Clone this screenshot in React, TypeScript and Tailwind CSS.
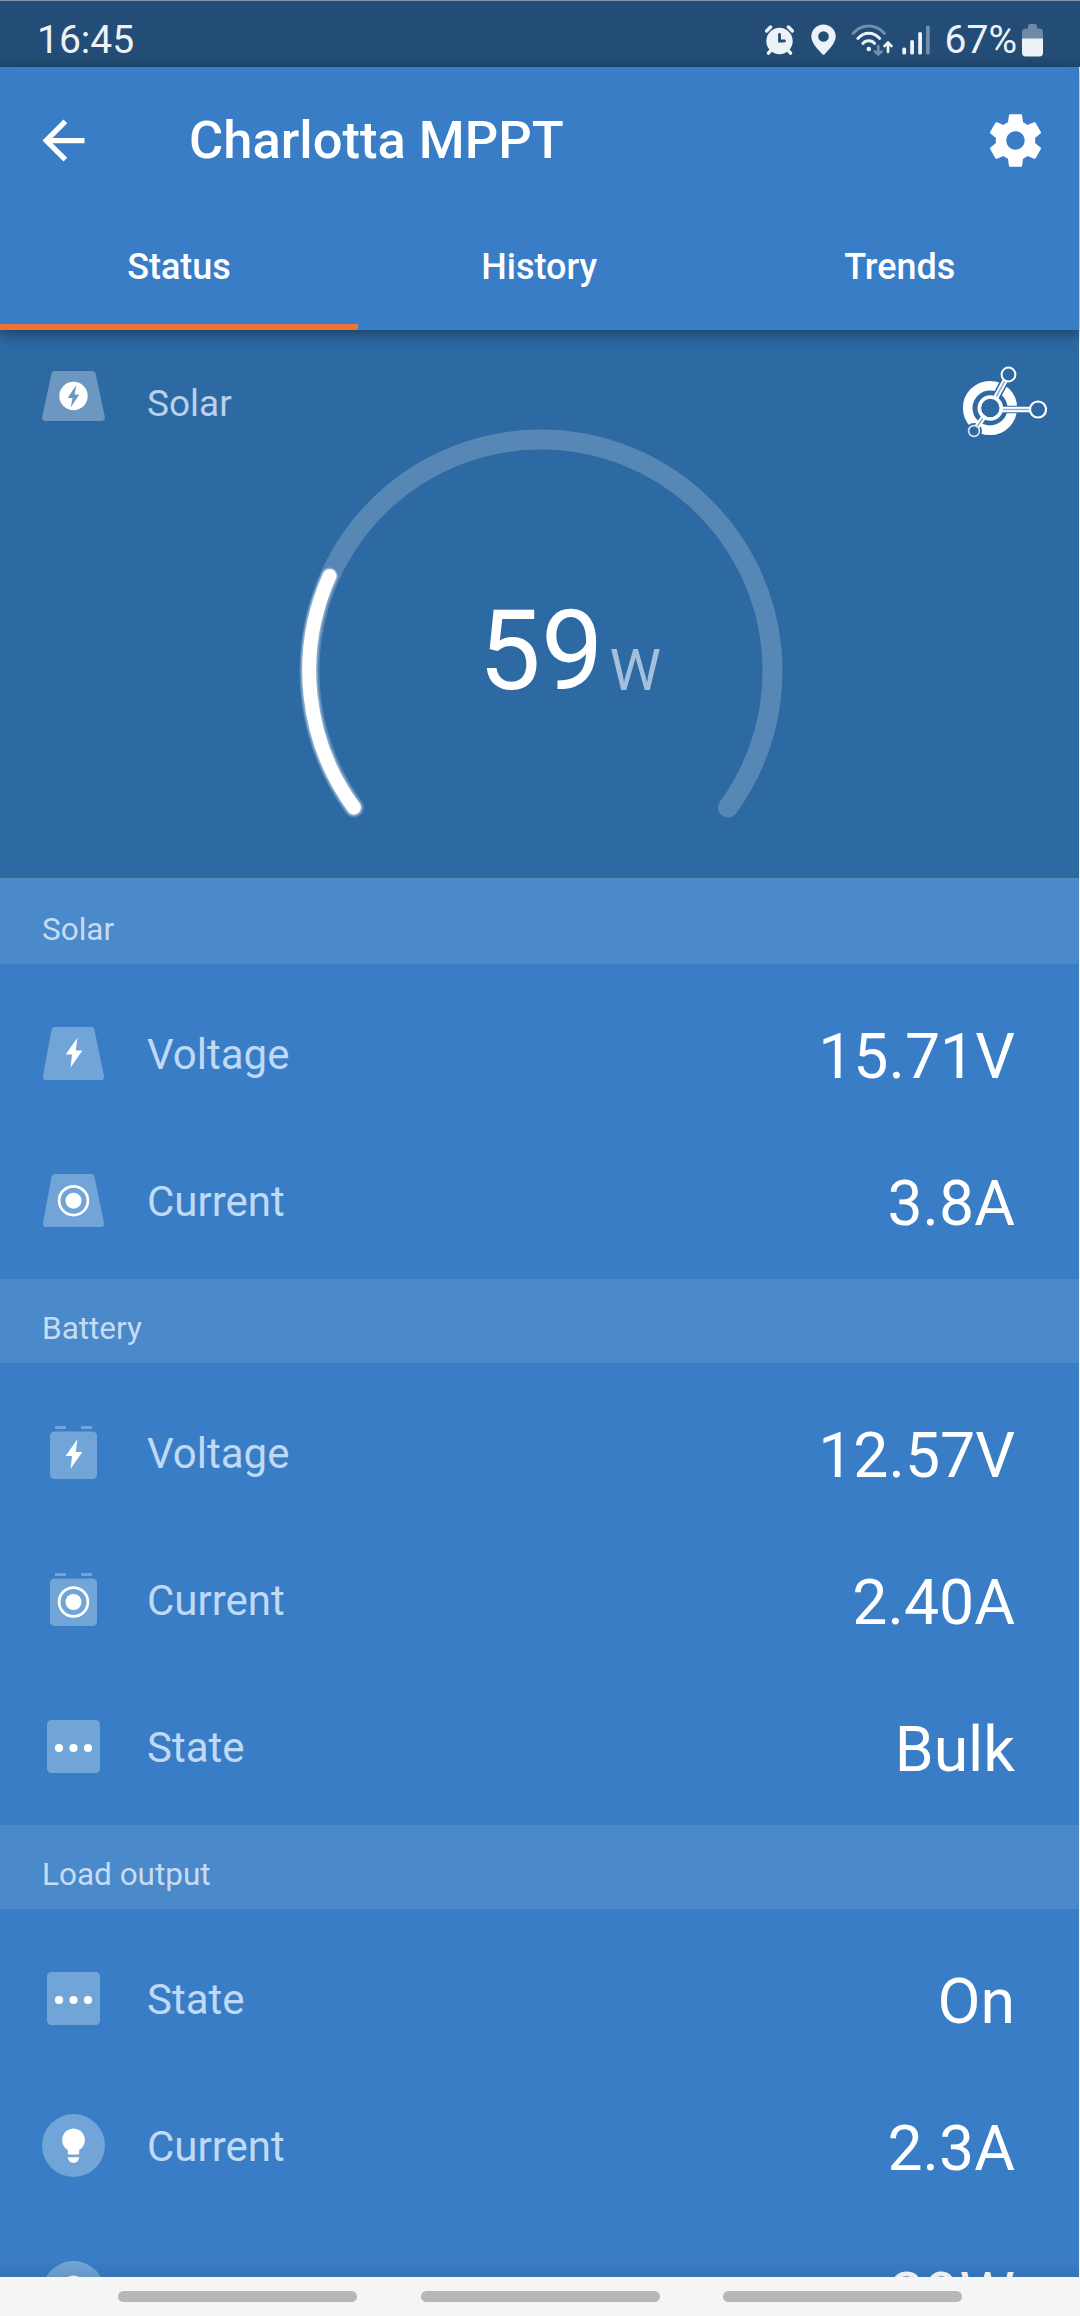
import React from 'react';

const BOLT = 'M35.4 16 L23.6 32.6 H30 L28.6 45.4 L40.4 28.6 H33.8 Z';

const PanelShape = () => (
  <path d="M13 5 H49.5 Q52 5 52.5 8 L62 54 Q62.6 58 59 58 H4 Q0.4 58 1 54 L9.5 8 Q10 5 13 5 Z" fill="#71a4d7" />
);

const BatteryShape = () => (
  <g fill="#71a4d7">
    <rect x="13" y="5" width="11" height="3" />
    <rect x="39" y="5" width="11" height="3" />
    <rect x="8" y="10.5" width="47" height="47.5" rx="4.5" />
  </g>
);

const Target = ({ cy }: { cy: number }) => (
  <g>
    <circle cx="31.5" cy={cy} r="14.4" fill="none" stroke="white" strokeWidth="2.7" />
    <circle cx="31.5" cy={cy} r="8" fill="white" />
  </g>
);

const icons = {
  panelVoltage: (
    <>
      <PanelShape />
      <path d={BOLT} fill="white" />
    </>
  ),
  panelCurrent: (
    <>
      <PanelShape />
      <Target cy={31.7} />
    </>
  ),
  batteryVoltage: (
    <>
      <BatteryShape />
      <path d={BOLT} fill="white" transform="translate(0 2.3)" />
    </>
  ),
  batteryCurrent: (
    <>
      <BatteryShape />
      <Target cy={34} />
    </>
  ),
  state: (
    <>
      <rect x="5" y="5" width="53" height="53" rx="4.5" fill="#71a4d7" />
      <circle cx="17" cy="33" r="4.1" fill="white" />
      <circle cx="31.5" cy="33" r="4.1" fill="white" />
      <circle cx="46" cy="33" r="4.1" fill="white" />
    </>
  ),
  bulb: (
    <>
      <circle cx="31.5" cy="31.5" r="31.5" fill="#71a4d7" />
      <path
        d="M31.5 14.4 A11.6 11.6 0 0 1 37.2 36 V39.5 Q37.2 40.4 36.2 40.4 H26.8 Q25.8 40.4 25.8 39.5 V36 A11.6 11.6 0 0 1 31.5 14.4 Z"
        fill="white"
      />
      <path d="M25.8 43.2 H37.2 A5.7 5.7 0 0 1 25.8 43.2 Z" fill="white" />
    </>
  ),
};

type RowProps = {
  icon: keyof typeof icons;
  label?: string;
  value: string;
};

type SectionProps = {
  title: string;
  rows: RowProps[];
  first?: boolean;
};

const sections: SectionProps[] = [
  {
    title: 'Solar',
    first: true,
    rows: [
      { icon: 'panelVoltage', label: 'Voltage', value: '15.71V' },
      { icon: 'panelCurrent', label: 'Current', value: '3.8A' },
    ],
  },
  {
    title: 'Battery',
    rows: [
      { icon: 'batteryVoltage', label: 'Voltage', value: '12.57V' },
      { icon: 'batteryCurrent', label: 'Current', value: '2.40A' },
      { icon: 'state', label: 'State', value: 'Bulk' },
    ],
  },
  {
    title: 'Load output',
    rows: [
      { icon: 'state', label: 'State', value: 'On' },
      { icon: 'bulb', label: 'Current', value: '2.3A' },
      { icon: 'bulb', value: '29W' },
    ],
  },
];

const Row = ({ icon, label, value }: RowProps) => (
  <div className="flex h-[147px] shrink-0 items-center pl-[42px] pr-[64px]">
    <svg viewBox="0 0 63 63" className="mb-0.5 size-[63px] shrink-0">
      {icons[icon]}
    </svg>
    {label && <span className="ml-[42px] text-[42px] leading-none text-[#c0d9f4]">{label}</span>}
    <span className="ml-auto pt-1.5 text-[62.5px] leading-none text-white">{value}</span>
  </div>
);

const Section = ({ title, rows, first }: SectionProps) => (
  <section className="shrink-0">
    <h2
      className={`flex items-end pb-[15px] pl-[42px] text-[31.5px] leading-[38px] text-[#c6dcf3] bg-[#4b8aca] ${
        first ? 'h-[86px] border-t-2 border-[#5688b8]' : 'h-[84px]'
      }`}
    >
      {title}
    </h2>
    <div className="pt-[17px] pb-1">
      {rows.map((row) => (
        <Row key={row.value} {...row} />
      ))}
    </div>
  </section>
);

const StatusBar = () => (
  <div className="flex h-[67px] items-center border-t border-[#8496a8] bg-[#234d76] pl-[37px] pr-[37px] text-[#edf2f7]">
    <span className="pt-[13px] text-[39px] leading-none">16:45</span>
    <svg viewBox="0 0 29 30" className="ml-auto mt-3 h-[30px] w-[29px]">
      <circle cx="14.5" cy="16" r="13.2" fill="#edf2f7" />
      <path d="M1.6 6 L5.6 2 M27.4 6 L23.4 2" stroke="#edf2f7" strokeWidth="3.4" strokeLinecap="round" />
      <path d="M6 25 L3.6 28 M23 25 L25.4 28" stroke="#edf2f7" strokeWidth="3.6" strokeLinecap="round" />
      <path d="M14.5 9.5 V16 H19.5" fill="none" stroke="#234d76" strokeWidth="2.8" strokeLinecap="round" />
    </svg>
    <svg viewBox="0 0 25 31" className="ml-[17px] mt-[11px] h-[31px] w-[25px]">
      <path
        d="M12.5 0.5 A12.2 12.2 0 0 1 24.7 12.6 C24.7 19 18 25.5 13.7 30.2 Q12.5 31.3 11.3 30.2 C7 25.5 0.3 19 0.3 12.6 A12.2 12.2 0 0 1 12.5 0.5 Z M12.5 7.2 A5.3 5.3 0 1 0 12.5 17.8 A5.3 5.3 0 1 0 12.5 7.2 Z"
        fill="#edf2f7"
        fillRule="evenodd"
      />
    </svg>
    <svg viewBox="0 0 42 32" className="ml-[15px] mt-[12px] h-[32px] w-[42px]" fill="none" strokeLinecap="round">
      <path d="M2 9.5 C10.5 -0.5 25 -0.5 33.5 9.5" stroke="#728eab" strokeWidth="2.8" />
      <path d="M6.8 14.5 C13 7.5 22.5 7.5 28.7 14.5" stroke="#edf2f7" strokeWidth="2.8" />
      <path d="M11.8 19.5 C15 15.8 20.5 15.8 23.7 19.5" stroke="#edf2f7" strokeWidth="2.8" />
      <circle cx="17.8" cy="25" r="2.3" fill="#edf2f7" />
      <path d="M27.3 22 V30.4 M24 27.4 L27.3 30.4 L30.6 27.4" stroke="#728eab" strokeWidth="2.7" />
      <path d="M37 28 V19 M33.6 22 L37 18.6 L40.4 22" stroke="#edf2f7" strokeWidth="2.7" />
    </svg>
    <svg viewBox="0 0 28 30" className="ml-[9px] mt-[12px] h-[30px] w-[28px]">
      <rect x="0.3" y="22.5" width="3.8" height="7" rx="1.6" fill="#edf2f7" />
      <rect x="8.2" y="15" width="3.8" height="14.5" rx="1.6" fill="#edf2f7" />
      <rect x="16.2" y="7" width="3.8" height="22.5" rx="1.6" fill="#edf2f7" />
      <rect x="24" y="0.5" width="3.8" height="29" rx="1.6" fill="#728eab" />
    </svg>
    <span className="ml-[15px] pt-[13px] text-[39px] leading-none">67%</span>
    <svg viewBox="0 0 21 33" className="ml-[5px] mt-[12px] h-[33px] w-[21px]">
      <path d="M0 15 V8 Q0 4.5 4 4.5 H6 V2 Q6 0 8 0 H13 Q15 0 15 2 V4.5 H17 Q21 4.5 21 8 V15 Z" fill="#6f8aa7" />
      <path d="M0 14.5 H21 V28.5 Q21 32.5 17.5 32.5 H3.5 Q0 32.5 0 28.5 Z" fill="#edf2f7" />
    </svg>
  </div>
);

const Header = () => (
  <header className="relative z-10 bg-[#397dc6] text-white shadow-[0_3px_14px_rgba(0,0,0,0.45)]">
    <div className="flex h-[147px] items-center px-[32px]">
      <svg viewBox="0 0 24 24" fill="white" className="size-[63px]">
        <path d="M20 11H7.83l5.59-5.59L12 4l-8 8 8 8 1.41-1.41L7.83 13H20v-2z" />
      </svg>
      <h1 className="ml-[94px] text-[52.5px] font-medium leading-none">Charlotta MPPT</h1>
      <svg viewBox="0 0 24 24" fill="white" className="ml-auto size-[63px]">
        <path d="M19.43 12.98c.04-.32.07-.64.07-.98s-.03-.66-.07-.98l2.11-1.65c.19-.15.24-.42.12-.64l-2-3.46c-.12-.22-.39-.3-.61-.22l-2.49 1c-.52-.4-1.08-.73-1.69-.98l-.38-2.65C14.46 2.18 14.25 2 14 2h-4c-.25 0-.46.18-.49.42l-.38 2.65c-.61.25-1.17.59-1.69.98l-2.49-1c-.23-.09-.49 0-.61.22l-2 3.46c-.13.22-.07.49.12.64l2.11 1.65c-.04.32-.07.65-.07.98s.03.66.07.98l-2.11 1.65c-.19.15-.24.42-.12.64l2 3.46c.12.22.39.3.61.22l2.49-1c.52.4 1.08.73 1.69.98l.38 2.65c.03.24.24.42.49.42h4c.25 0 .46-.18.49-.42l.38-2.65c.61-.25 1.17-.59 1.69-.98l2.49 1c.23.09.49 0 .61-.22l2-3.46c.12-.22.07-.49-.12-.64l-2.11-1.65zM12 15.5c-1.93 0-3.5-1.57-3.5-3.5s1.57-3.5 3.5-3.5 3.5 1.57 3.5 3.5-1.57 3.5-3.5 3.5z" />
      </svg>
    </div>
    <nav className="flex h-[116px] text-[36px] font-medium leading-none">
      <div className="flex w-[358px] items-center justify-center border-b-[6px] border-[#ee7335] pb-1">Status</div>
      <div className="flex flex-1 items-center justify-center pb-2.5 pl-0.5">History</div>
      <div className="flex flex-1 items-center justify-center pb-2.5 pl-0.5">Trends</div>
    </nav>
  </header>
);

const HubLogo = () => (
  <svg viewBox="0 0 85 72" className="h-[72px] w-[85px]" fill="none">
    <circle cx="28" cy="42" r="22.3" stroke="white" strokeWidth="9.6" />
    {/* gaps that the spokes cut into the ring */}
    <path d="M28 42 L46.5 8.5" stroke="#2d69a3" strokeWidth="8.5" />
    <path d="M28 43.5 H76" stroke="#2d69a3" strokeWidth="7.5" />
    <circle cx="12" cy="65" r="8" fill="#2d69a3" />
    <path d="M28 42 L46.5 8.5 M28 42 L12 65 M28 43.5 H70" stroke="white" strokeWidth="5.4" />
    <path d="M28 42 L46.5 8.5 M28 42 L12 65 M28 43.5 H70" stroke="#8fb1d1" strokeWidth="1.6" />
    <circle cx="28.3" cy="42" r="11" fill="#2d69a3" stroke="white" strokeWidth="3.6" />
    <circle cx="46.5" cy="8.5" r="6.9" fill="#2d69a3" stroke="white" strokeWidth="2" />
    <circle cx="76" cy="43.5" r="8" fill="#2d69a3" stroke="white" strokeWidth="2.2" />
    <circle cx="12" cy="65" r="5.4" fill="#2d69a3" stroke="#dbe8f4" strokeWidth="1.6" />
  </svg>
);

const Gauge = () => (
  <div className="relative ml-[299px] h-[400px] w-[484px]">
    <svg viewBox="0 0 484 400" className="size-full" fill="none" strokeLinecap="round">
      <path d="M55 378.5 A231.5 231.5 0 1 1 429 378.5" stroke="white" strokeOpacity="0.2" strokeWidth="20" />
      <path d="M54.9 378.5 A231.5 231.5 0 0 1 30.5 147" stroke="white" strokeOpacity="0.3" strokeWidth="17" />
      <path d="M54.9 378.5 A231.5 231.5 0 0 1 30.5 147" stroke="white" strokeWidth="14" />
    </svg>
    <div className="absolute inset-x-0 top-[167px] flex justify-center">
      <div className="relative text-[111px] leading-none text-white">
        59
        <span className="absolute bottom-[8px] left-full ml-1.5 text-[58px] leading-none text-[#a3bfdc]">W</span>
      </div>
    </div>
  </div>
);

const SolarSummary = () => (
  <div className="relative h-[548px] shrink-0 bg-[#2d69a3]">
    <div className="flex h-[99px] items-start pl-[42px] pr-[32px]">
      <svg viewBox="0 0 63 50" className="mt-[41px] h-[50px] w-[63px]">
        <path d="M13 0 H50 Q53 0 53.6 3 L62.8 45.5 Q63.4 50 59.5 50 H3.5 Q-0.4 50 0.2 45.5 L9.4 3 Q10 0 13 0 Z" fill="#6c97c1" />
        <circle cx="31.5" cy="25" r="14.2" fill="white" />
        <path d="M34.3 14 L25.7 27 H30.5 L28.7 36.5 L37.3 23.5 H32.5 Z" fill="#6c97c1" />
      </svg>
      <span className="ml-[42px] mt-[55px] text-[37px] leading-none text-[#b8d1ec]">Solar</span>
      <div className="ml-auto mt-[36px]">
        <HubLogo />
      </div>
    </div>
    <Gauge />
  </div>
);

const App = () => {
  return (
    <div className="flex h-[2316px] w-[1080px] flex-col overflow-hidden bg-[#f5f5f5] font-['Roboto',sans-serif]">
      <StatusBar />
      <div className="mr-px flex min-h-0 flex-1 flex-col">
        <Header />
        <main className="relative flex min-h-0 flex-1 flex-col overflow-hidden bg-[#397dc6]">
          <SolarSummary />
          {sections.map((section) => (
            <Section key={section.title} {...section} />
          ))}
          <div className="absolute inset-x-0 bottom-0 h-4 bg-linear-to-b from-transparent to-black/8" />
        </main>
      </div>
      <div className="flex h-[39px] shrink-0 items-center gap-[63.5px] pl-[118px]">
        <div className="h-[11px] w-[239px] rounded-full bg-[#b7b7b7]" />
        <div className="h-[11px] w-[239px] rounded-full bg-[#b7b7b7]" />
        <div className="h-[11px] w-[239px] rounded-full bg-[#b7b7b7]" />
      </div>
    </div>
  );
};

export default App;
